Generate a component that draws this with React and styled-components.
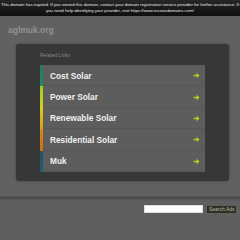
import React from "react";
import styled, { createGlobalStyle } from "styled-components";

const Global = createGlobalStyle`
  html, body { margin: 0; padding: 0; background: #5f5f5f; }
  body { font-family: Arial, "Liberation Sans", sans-serif; width: 240px; overflow: hidden; }
`;

const TopBar = styled.div`
  height: 16px;
  background: linear-gradient(#262626, #0e0e0e);
  color: #e8e8e8;
  font-size: 4.3px;
  line-height: 5.6px;
  text-align: center;
  padding-top: 2px;
  box-sizing: border-box;
  white-space: nowrap;
  overflow: hidden;
  box-shadow: 0 1px 2px rgba(0,0,0,0.4);
`;

const Main = styled.div`
  background: #616161;
  height: 181px;
  box-sizing: border-box;
  padding: 7px 11px 0 16px;
  border-bottom: 1px solid #555;
  box-shadow: 0 2px 2px rgba(0,0,0,0.25);
`;

const Domain = styled.div`
  color: #929292;
  font-weight: bold;
  font-size: 8.5px;
  margin-left: -8px;
  height: 21px;
  line-height: 14px;
`;

const Panel = styled.div`
  background: #373737;
  border-radius: 3px;
  box-shadow: 0 0 3px rgba(0,0,0,0.35);
  height: 137px;
  box-sizing: border-box;
  padding: 8px 24px 0 24px;
`;

const Label = styled.div`
  color: #8a8a8a;
  font-size: 5px;
  height: 13px;
`;

const List = styled.div`
  display: flex;
  flex-direction: column;
`;

const Row = styled.div`
  display: flex;
  align-items: center;
  height: 21.4px;
  background: #5d5d5d;
  border-left: 3px solid;
  border-image: ${p => p.$c} 1;
  box-sizing: border-box;
  padding: 0 5px 0 7px;
  color: #f0f0f0;
  font-weight: bold;
  font-size: 8.3px;
  position: relative;
  &::after {
    content: "";
    position: absolute;
    left: 0; right: 0; bottom: 0;
    height: 1px;
    background: #565656;
  }
`;

const Text = styled.span`
  flex: 1;
`;

const Arrow = styled.svg`
  width: 7px;
  height: 7px;
`;

const Footer = styled.div`
  display: flex;
  justify-content: flex-end;
  align-items: center;
  gap: 4px;
  padding: 8px 4px 0 0;
`;

const Input = styled.div`
  width: 57px;
  height: 6px;
  background: #fff;
  border: 1px solid #ddd;
`;

const Button = styled.div`
  background: #2f3126;
  color: #b8b8a8;
  font-size: 5px;
  line-height: 7px;
  padding: 0 1.5px;
`;

const links = [
  ["Cost Solar", "linear-gradient(#2a7a66, #1f8a60)"],
  ["Power Solar", "linear-gradient(#9ccc28, #d4d018)"],
  ["Renewable Solar", "linear-gradient(#d8d018, #d89a1a)"],
  ["Residential Solar", "linear-gradient(#d88a1a, #c8701c)"],
  ["Muk", "linear-gradient(#1c5868, #1c6070)"],
];

export default function App() {
  return (
    <>
      <Global />
      <TopBar>
        This domain has expired. If you owned this domain, contact your domain registration service provider for further assistance. If<br />
        you need help identifying your provider, visit https://www.tucowsdomains.com/
      </TopBar>
      <Main>
        <Domain>aglmuk.org</Domain>
        <Panel>
          <Label>Related Links</Label>
          <List>
            {links.map(([t, c]) => (
              <Row key={t} $c={c}>
                <Text>{t}</Text>
                <Arrow viewBox="0 0 10 10">
                  <path d="M1 3.8h4.2V1.2L9.2 5 5.2 8.8V6.2H1z" fill="#b2d41e" />
                </Arrow>
              </Row>
            ))}
          </List>
        </Panel>
      </Main>
      <Footer>
        <Input />
        <Button>Search Ads</Button>
      </Footer>
    </>
  );
}
